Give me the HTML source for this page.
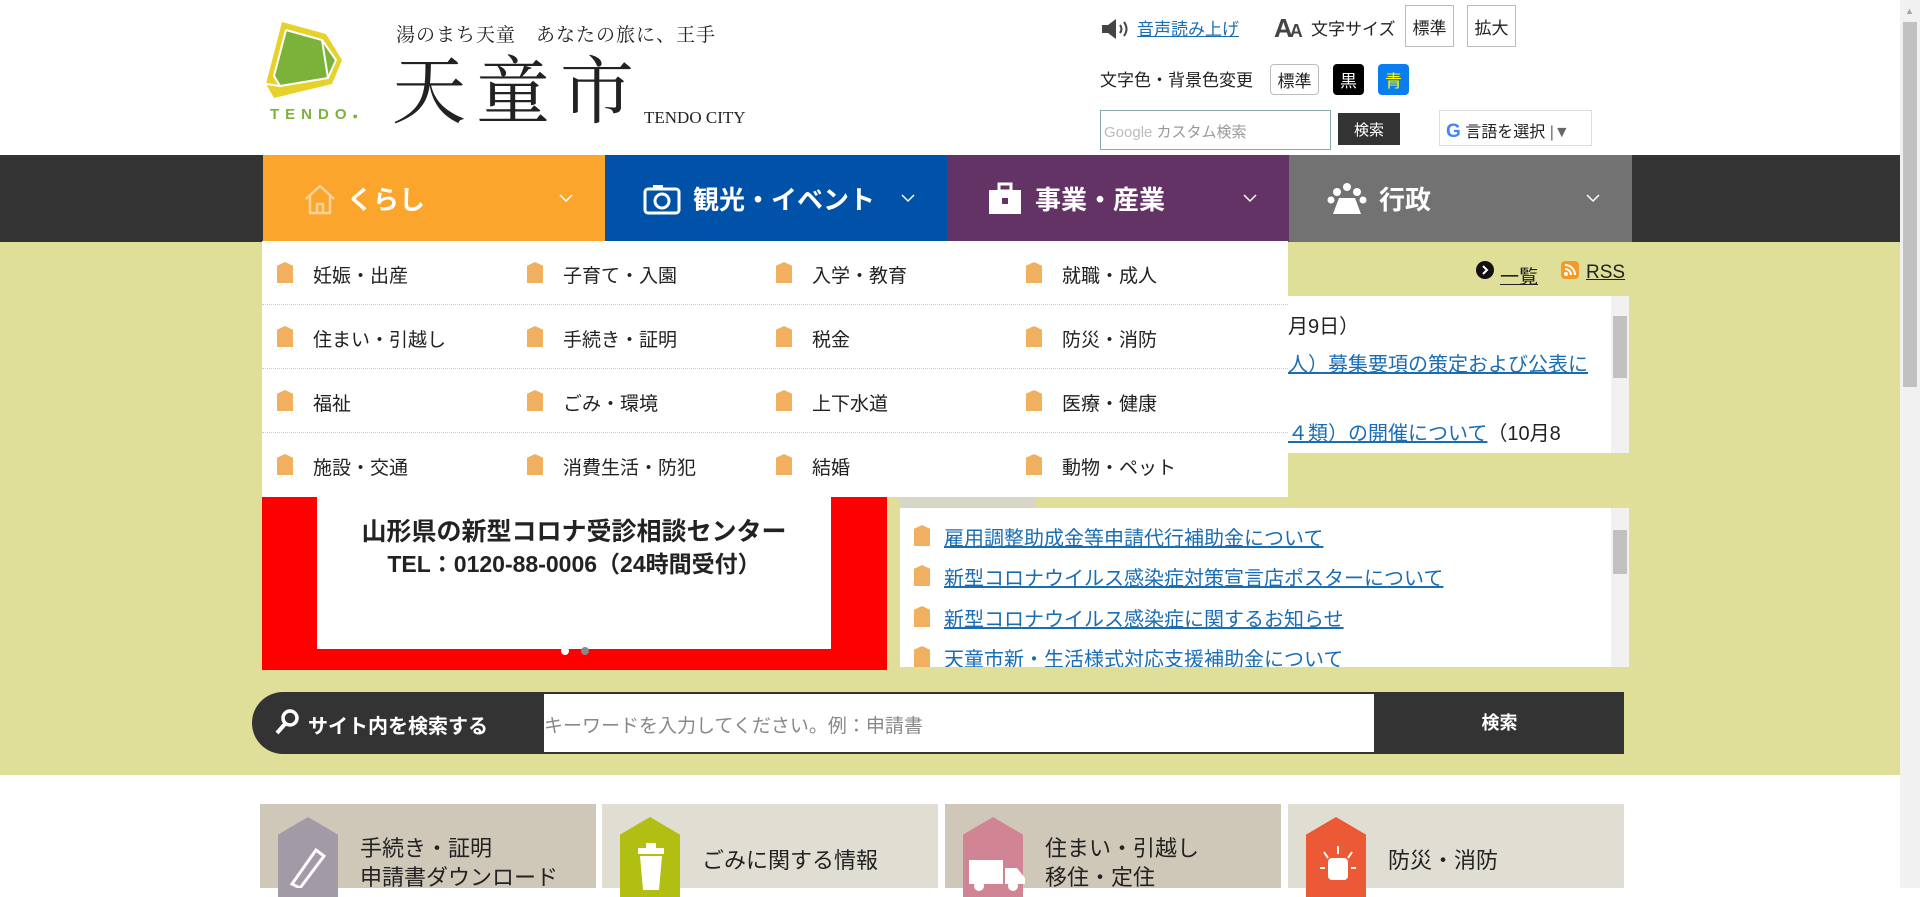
<!DOCTYPE html>
<html><head><meta charset="utf-8"><style>
*{margin:0;padding:0;box-sizing:border-box}
body{width:1920px;height:888px;overflow:hidden;background:#fff;font-family:"Liberation Sans","Noto Sans CJK JP",sans-serif;color:#222;position:relative}
.a{position:absolute}
.btn{position:absolute;border:1px solid #bbb;background:#fff;font-size:17px;display:flex;align-items:center;justify-content:center}
.nav{position:absolute;top:155px;height:87px;color:#fff;font-weight:bold;font-size:26px;display:flex;align-items:center}
.nav .ch{position:absolute;right:32px;top:39px}
.dd{position:absolute;left:262px;top:241px;width:1026px;height:256px;background:#fff}
.row{position:absolute;left:0;width:1026px;height:64px;border-bottom:1px dotted #ccc}
.it{position:absolute;font-size:19px;color:#222;top:20px}
.tag{position:absolute;width:16px;height:21px;background:#f0b060;clip-path:polygon(50% 0,100% 18%,100% 100%,0 100%,0 18%)}
.lk{position:absolute;left:944px;font-size:20px;color:#1a6db5;text-decoration:underline}
a{color:#1a6db5}
.card{position:absolute;top:804px;height:84px;width:336px}
.card .pen{position:absolute;left:18px;top:13px;width:60px;height:80px;clip-path:polygon(50% 0,100% 22%,100% 100%,0 100%,0 22%)}
.card .t{position:absolute;left:100px;font-size:22px;line-height:29px;color:#222}
</style></head><body>
<!-- logo -->
<svg class="a" style="left:264px;top:20px" width="82" height="84" viewBox="0 0 82 84">
<polygon points="18,2 62,14 78,40 68,64 10,78 2,64" fill="#e6d22a"/>
<polygon points="22,10 58,20 72,40 64,58 16,66 10,56" fill="#7bb33a"/>
<polyline points="22,10 10,56 16,66 64,58 72,40 58,20 22,10" fill="none" stroke="#fff" stroke-width="2"/>
<line x1="58" y1="20" x2="64" y2="58" stroke="#fff" stroke-width="2"/>
<line x1="2" y1="64" x2="16" y2="66" stroke="#fff" stroke-width="2"/>
</svg>
<div class="a" style="left:270px;top:106px;font-size:15px;font-weight:bold;letter-spacing:6px;color:#7bb33a">TENDO<span style="font-size:9px">●</span></div>
<div class="a" style="left:396px;top:20px;font-size:19px;font-family:'Noto Serif CJK SC',serif;letter-spacing:1px">湯のまち天童　あなたの旅に、王手</div>
<div class="a" style="left:392px;top:46px;font-size:74px;line-height:80px;font-family:'Noto Serif CJK SC',serif;letter-spacing:10px">天童市</div>
<div class="a" style="left:644px;top:108px;font-size:17px;font-family:'Liberation Serif',serif">TENDO CITY</div>
<!-- utilities -->
<svg class="a" style="left:1100px;top:18px" width="36" height="22" viewBox="0 0 36 22"><polygon points="2,7 8,7 16,1 16,21 8,15 2,15" fill="#444"/><path d="M20 7q3 4 0 8M24 4q5 7 0 14" stroke="#444" stroke-width="2" fill="none"/></svg>
<div class="a" style="left:1137px;top:15px;font-size:17px;color:#1a6db5;text-decoration:underline">音声読み上げ</div>
<div class="a" style="left:1274px;top:13px;font-size:26px;font-weight:bold;color:#444;letter-spacing:-3px">A<span style="font-size:18px">A</span></div>
<div class="a" style="left:1311px;top:15px;font-size:17px">文字サイズ</div>
<div class="btn" style="left:1405px;top:5px;width:49px;height:42px">標準</div>
<div class="btn" style="left:1467px;top:5px;width:49px;height:42px">拡大</div>
<div class="a" style="left:1100px;top:66px;font-size:17px">文字色・背景色変更</div>
<div class="btn" style="left:1270px;top:64px;width:49px;height:31px;border-radius:4px">標準</div>
<div class="btn" style="left:1333px;top:64px;width:31px;height:31px;border-radius:4px;background:#000;color:#fff;border:none">黒</div>
<div class="btn" style="left:1378px;top:64px;width:31px;height:31px;border-radius:4px;background:#0a7ef0;color:#ff0;border:none">青</div>
<div class="a" style="left:1100px;top:110px;width:231px;height:40px;border:1px solid #8aa;font-size:15px;color:#999;padding:10px 3px"><span style="color:#bbb">Google</span> カスタム検索</div>
<div class="btn" style="left:1338px;top:113px;width:62px;height:32px;background:#333;color:#fff;border:none;font-size:15px">検索</div>
<div class="a" style="left:1439px;top:110px;width:153px;height:36px;border:1px solid #ddd;font-size:16px;padding:7px 6px;white-space:nowrap"><b style="color:#4285f4;font-size:19px">G</b> 言語を選択 <span style="color:#666">|▼</span></div>
<!-- nav -->
<div class="nav" style="left:0;width:1920px;background:#333"></div>
<div class="nav" style="left:263px;width:342px;background:#fba52c;padding-left:40px">
<svg width="34" height="32" viewBox="0 0 34 32"><path d="M3 16L17 3l14 13M7 13v17h20V13M14 30v-9h6v9" stroke="#fcd29a" stroke-width="2.5" fill="none"/></svg><span style="margin-left:10px">くらし</span><svg class="ch" width="14" height="9"><path d="M1 1l6 6 6-6" stroke="#fff" stroke-width="1.5" fill="none"/></svg></div>
<div class="nav" style="left:605px;width:342px;background:#0051a8;padding-left:38px">
<svg width="38" height="32" viewBox="0 0 38 32"><rect x="2" y="6" width="34" height="24" rx="3" stroke="#fff" stroke-width="3" fill="none"/><rect x="10" y="2" width="10" height="5" fill="#fff"/><circle cx="19" cy="18" r="7" stroke="#fff" stroke-width="3" fill="none"/></svg><span style="margin-left:12px">観光・イベント</span><svg class="ch" width="14" height="9"><path d="M1 1l6 6 6-6" stroke="#fff" stroke-width="1.5" fill="none"/></svg></div>
<div class="nav" style="left:947px;width:342px;background:#643366;padding-left:40px">
<svg width="36" height="34" viewBox="0 0 36 34"><rect x="2" y="8" width="32" height="24" fill="#fff"/><rect x="12" y="2" width="12" height="7" stroke="#fff" stroke-width="3" fill="none"/><rect x="15" y="16" width="6" height="6" fill="#643366"/></svg><span style="margin-left:12px">事業・産業</span><svg class="ch" width="14" height="9"><path d="M1 1l6 6 6-6" stroke="#fff" stroke-width="1.5" fill="none"/></svg></div>
<div class="nav" style="left:1289px;width:343px;background:#727272;padding-left:38px">
<svg width="40" height="34" viewBox="0 0 40 34"><circle cx="20" cy="5" r="4" fill="#fff"/><circle cx="10" cy="10" r="4" fill="#fff"/><circle cx="30" cy="10" r="4" fill="#fff"/><circle cx="4" cy="18" r="3.5" fill="#fff"/><circle cx="36" cy="18" r="3.5" fill="#fff"/><polygon points="12,16 28,16 34,32 6,32" fill="#fff"/></svg><span style="margin-left:12px">行政</span><svg class="ch" width="14" height="9"><path d="M1 1l6 6 6-6" stroke="#fff" stroke-width="1.5" fill="none"/></svg></div>
<!-- khaki area -->
<div class="a" style="left:0;top:242px;width:1900px;height:533px;background:#e0df9a"></div>
<svg class="a" style="left:1476px;top:261px" width="18" height="18"><circle cx="9" cy="9" r="9" fill="#111"/><path d="M7 5l4 4-4 4" stroke="#fff" stroke-width="2" fill="none"/></svg>
<div class="a" style="left:1500px;top:262px;font-size:19px;text-decoration:underline">一覧</div>
<svg class="a" style="left:1561px;top:261px" width="18" height="18"><rect width="18" height="18" rx="4" fill="#f29a2a"/><circle cx="5" cy="13" r="2" fill="#fff"/><path d="M4 8a6 6 0 016 6M4 4a10 10 0 0110 10" stroke="#fff" stroke-width="2" fill="none"/></svg>
<div class="a" style="left:1586px;top:262px;font-size:19px;text-decoration:underline">RSS</div>
<div class="a" style="left:1268px;top:296px;width:361px;height:157px;background:#fff;overflow:hidden">
<div class="a" style="left:20px;top:14px;font-size:20px">月9日）</div>
<div class="a" style="left:20px;top:52px;font-size:20px;color:#1a6db5;text-decoration:underline">人）募集要項の策定および公表に</div>
<div class="a" style="left:20px;top:121px;font-size:20px"><span style="color:#1a6db5;text-decoration:underline">４類）の開催について</span>（10月8</div>
<div class="a" style="left:343px;top:0;width:18px;height:157px;background:#f1f1f1"><div style="position:absolute;left:2px;top:20px;width:14px;height:62px;background:#c1c1c1"></div></div>
</div>
<!-- banner -->
<div class="a" style="left:262px;top:496px;width:625px;height:174px;background:#f00"></div>
<div class="a" style="left:317px;top:490px;width:514px;height:159px;background:#fff"></div>
<div class="a" style="left:317px;top:512px;width:514px;text-align:center;font-size:25px;font-weight:bold">山形県の新型コロナ受診相談センター</div>
<div class="a" style="left:317px;top:545px;width:514px;text-align:center;font-size:23px;font-weight:bold">TEL：0120-88-0006（24時間受付）</div>
<div class="a" style="left:561px;top:647px;width:8px;height:8px;border-radius:50%;background:#fff"></div>
<div class="a" style="left:581px;top:647px;width:8px;height:8px;border-radius:50%;background:#888"></div>
<div class="a" style="left:900px;top:496px;width:136px;height:14px;background:#d8d6c8"></div>
<div class="a" style="left:900px;top:508px;width:729px;height:159px;background:#fff;overflow:hidden">
<div class="tag" style="left:14px;top:17px"></div><div class="lk" style="left:44px;top:14px">雇用調整助成金等申請代行補助金について</div>
<div class="tag" style="left:14px;top:57px"></div><div class="lk" style="left:44px;top:54px">新型コロナウイルス感染症対策宣言店ポスターについて</div>
<div class="tag" style="left:14px;top:98px"></div><div class="lk" style="left:44px;top:95px">新型コロナウイルス感染症に関するお知らせ</div>
<div class="tag" style="left:14px;top:138px"></div><div class="lk" style="left:44px;top:135px">天童市新・生活様式対応支援補助金について</div>
<div class="a" style="left:711px;top:0;width:18px;height:159px;background:#f1f1f1"><div style="position:absolute;left:2px;top:22px;width:14px;height:44px;background:#c1c1c1"></div></div>
</div>
<!-- dropdown -->
<div class="dd">
<div class="row" style="top:0"><div class="tag" style="left:15px;top:21px"></div><div class="it" style="left:51px">妊娠・出産</div><div class="tag" style="left:265px;top:21px"></div><div class="it" style="left:301px">子育て・入園</div><div class="tag" style="left:514px;top:21px"></div><div class="it" style="left:550px">入学・教育</div><div class="tag" style="left:764px;top:21px"></div><div class="it" style="left:800px">就職・成人</div></div>
<div class="row" style="top:64px"><div class="tag" style="left:15px;top:21px"></div><div class="it" style="left:51px">住まい・引越し</div><div class="tag" style="left:265px;top:21px"></div><div class="it" style="left:301px">手続き・証明</div><div class="tag" style="left:514px;top:21px"></div><div class="it" style="left:550px">税金</div><div class="tag" style="left:764px;top:21px"></div><div class="it" style="left:800px">防災・消防</div></div>
<div class="row" style="top:128px"><div class="tag" style="left:15px;top:21px"></div><div class="it" style="left:51px">福祉</div><div class="tag" style="left:265px;top:21px"></div><div class="it" style="left:301px">ごみ・環境</div><div class="tag" style="left:514px;top:21px"></div><div class="it" style="left:550px">上下水道</div><div class="tag" style="left:764px;top:21px"></div><div class="it" style="left:800px">医療・健康</div></div>
<div class="row" style="top:192px;border:none"><div class="tag" style="left:15px;top:21px"></div><div class="it" style="left:51px">施設・交通</div><div class="tag" style="left:265px;top:21px"></div><div class="it" style="left:301px">消費生活・防犯</div><div class="tag" style="left:514px;top:21px"></div><div class="it" style="left:550px">結婚</div><div class="tag" style="left:764px;top:21px"></div><div class="it" style="left:800px">動物・ペット</div></div>
</div>
<!-- search -->
<div class="a" style="left:252px;top:692px;width:300px;height:62px;background:#333;border-radius:31px 0 0 31px"></div>
<svg class="a" style="left:274px;top:708px" width="26" height="28" viewBox="0 0 26 28"><circle cx="16" cy="10" r="7" stroke="#fff" stroke-width="3.5" fill="none"/><line x1="11" y1="16" x2="3" y2="25" stroke="#fff" stroke-width="4"/></svg>
<div class="a" style="left:308px;top:710px;font-size:20px;font-weight:bold;color:#fff">サイト内を検索する</div>
<div class="a" style="left:542px;top:692px;width:834px;height:62px;background:#fff;border:2px solid #333;font-size:19px;color:#888;padding:17px 0 0 0">キーワードを入力してください。例：申請書</div>
<div class="a" style="left:1375px;top:692px;width:249px;height:62px;background:#333;color:#fff;font-weight:bold;font-size:18px;text-align:center;line-height:62px">検索</div>
<!-- cards -->
<div class="card" style="left:260px;background:#cfc8b9"><div class="pen" style="background:#a39aa8"></div><svg class="a" style="left:24px;top:40px" width="44" height="44"><path d="M8 40L32 6l8 6L16 44z" stroke="#fff" stroke-width="3" fill="none"/></svg><div class="t" style="top:30px">手続き・証明<br>申請書ダウンロード</div></div>
<div class="card" style="left:602px;background:#e0ddd3"><div class="pen" style="background:#b1be12"></div><svg class="a" style="left:32px;top:36px" width="34" height="50"><rect x="4" y="8" width="26" height="6" fill="#fff"/><rect x="12" y="3" width="10" height="6" fill="#fff"/><path d="M6 16h22l-3 34H9z" fill="#fff"/></svg><div class="t" style="top:42px">ごみに関する情報</div></div>
<div class="card" style="left:945px;background:#cfc8b9"><div class="pen" style="background:#d08494"></div><svg class="a" style="left:22px;top:52px" width="60" height="36"><rect x="2" y="4" width="34" height="24" fill="#fff"/><path d="M38 12h12l8 10v6H38z" fill="#fff"/><circle cx="12" cy="30" r="5" fill="#fff"/><circle cx="46" cy="30" r="5" fill="#fff"/></svg><div class="t" style="top:30px">住まい・引越し<br>移住・定住</div></div>
<div class="card" style="left:1288px;background:#e0ddd3"><div class="pen" style="background:#eb5a34"></div><svg class="a" style="left:30px;top:40px" width="40" height="48"><rect x="10" y="14" width="20" height="22" rx="4" fill="#fff"/><path d="M20 2v8M6 8l4 6M34 8l-4 6M2 24h5M33 24h5" stroke="#fff" stroke-width="2"/></svg><div class="t" style="top:42px">防災・消防</div></div>
<!-- scrollbar -->
<div class="a" style="left:1900px;top:0;width:20px;height:888px;background:#f1f1f1"></div>
<div class="a" style="left:1903px;top:22px;width:14px;height:365px;background:#c1c1c1"></div>
<div class="a" style="left:1905px;top:6px;font-size:9px;color:#a3a3a3">▲</div>
</body></html>
